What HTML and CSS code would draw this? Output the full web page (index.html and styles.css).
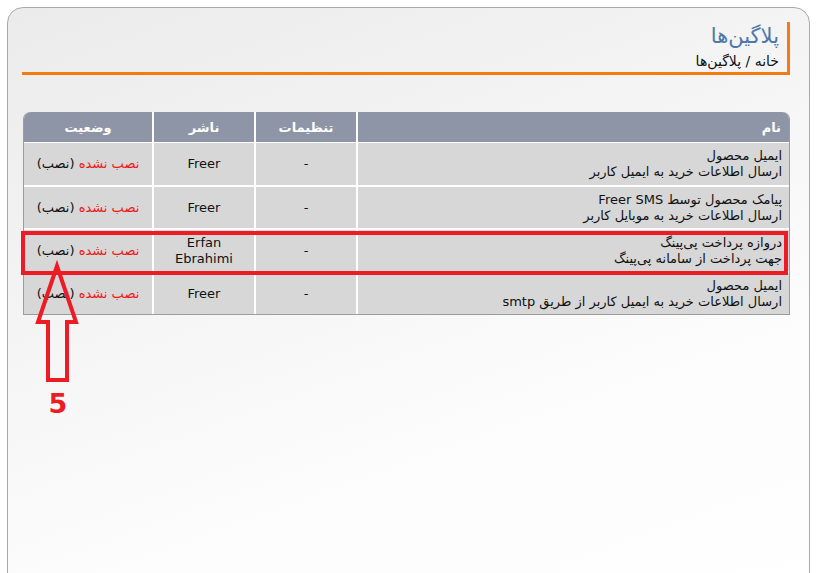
FILE: index.html
```html
<!DOCTYPE html>
<html lang="fa">
<head>
<meta charset="utf-8">
<title>پلاگین‌ها</title>
<link rel="stylesheet" href="styles.css">
</head>
<body>
<div class="panel" dir="rtl">
  <div class="page-head">
    <h1 class="title">پلاگین‌ها</h1>
    <div class="crumbs">خانه / پلاگین‌ها</div>
  </div>
  <table class="plugins">
    <thead>
      <tr>
        <th class="c-name">نام</th>
        <th class="c-set">تنظیمات</th>
        <th class="c-pub">ناشر</th>
        <th class="c-stat">وضعیت</th>
      </tr>
    </thead>
    <tbody>
      <tr>
        <td class="c-name">ایمیل محصول<br>ارسال اطلاعات خرید به ایمیل کاربر</td>
        <td class="c-set">-</td>
        <td class="c-pub">Freer</td>
        <td class="c-stat"><span class="red">نصب نشده</span> (نصب)</td>
      </tr>
      <tr>
        <td class="c-name">پیامک محصول توسط Freer SMS<br>ارسال اطلاعات خرید به موبایل کاربر</td>
        <td class="c-set">-</td>
        <td class="c-pub">Freer</td>
        <td class="c-stat"><span class="red">نصب نشده</span> (نصب)</td>
      </tr>
      <tr>
        <td class="c-name">دروازه پرداخت پی‌پینگ<br>جهت پرداخت از سامانه پی‌پینگ</td>
        <td class="c-set">-</td>
        <td class="c-pub">Erfan<br>Ebrahimi</td>
        <td class="c-stat"><span class="red">نصب نشده</span> (نصب)</td>
      </tr>
      <tr>
        <td class="c-name">ایمیل محصول<br>ارسال اطلاعات خرید به ایمیل کاربر از طریق smtp</td>
        <td class="c-set">-</td>
        <td class="c-pub">Freer</td>
        <td class="c-stat"><span class="red">نصب نشده</span> (نصب)</td>
      </tr>
    </tbody>
  </table>
</div>
<div class="highlight"></div>
<svg class="annot" width="817" height="573" viewBox="0 0 817 573">
  <polygon points="57,266 38,322 48,322 48,380 67,380 67,322 76,322" fill="none" stroke="#ed1c24" stroke-width="4" stroke-linejoin="miter"/>
  <text x="58" y="413" text-anchor="middle" class="five">5</text>
</svg>
</body>
</html>
```

FILE: styles.css
```css
html, body {
  margin: 0;
  padding: 0;
  background: #ffffff;
  overflow: hidden;
}
body {
  position: relative;
  width: 817px;
  height: 573px;
  font-family: "DejaVu Sans", "Liberation Sans", sans-serif;
  font-size: 13px;
  color: #111;
}
.panel {
  margin: 7px 0 0 7px;
  width: 803px;
  height: 620px;
  border: 1px solid #a9a9a9;
  border-radius: 16px 16px 0 0;
  background: linear-gradient(160deg, #ebebeb 0%, #f4f4f4 35%, #fcfcfc 65%, #ffffff 100%);
  padding: 14px 19px 0 14px;
  box-sizing: border-box;
}
.page-head {
  border-right: 3px solid #f47a12;
  border-bottom: 3px solid #f47a12;
  height: 53px;
  padding-right: 8px;
  box-sizing: border-box;
  display: flex;
  flex-direction: column;
}
.title {
  margin: 0;
  font-size: 21px;
  font-weight: normal;
  color: #4d76aa;
  line-height: 28px;
  height: 30px;
}
.crumbs {
  font-size: 14px;
  line-height: 18px;
  color: #111;
}
.plugins {
  margin-top: 37px;
  width: 765px;
  border-collapse: separate;
  border-spacing: 0;
  border: 1px solid #9c9c9c;
  border-top: none;
  border-radius: 7px 7px 0 0;
  table-layout: fixed;
}
.plugins th {
  background: #8e95a7;
  color: #ffffff;
  font-weight: bold;
  font-size: 13px;
  height: 30px;
  padding: 0 8px;
  border-left: 2px solid #ffffff;
  text-align: center;
  box-sizing: border-box;
}
.plugins th.c-name {
  text-align: right;
  border-radius: 0 7px 0 0;
}
.plugins th.c-stat {
  border-left: none;
  border-radius: 7px 0 0 0;
}
.plugins td {
  background: #d7d7d7;
  height: 43px;
  padding: 0 6px;
  border-top: 2px solid #ffffff;
  border-left: 2px solid #ffffff;
  text-align: center;
  line-height: 16px;
  box-sizing: border-box;
}
.plugins tbody tr:first-child td {
  border-top: 1px solid #ffffff;
}
.plugins td.c-stat {
  border-left: none;
}
.plugins td.c-name {
  text-align: right;
  padding-right: 7px;
}
.c-name { width: 433px; }
.c-set { width: 102px; }
.c-pub { width: 102px; }
.c-stat { width: 128px; }
.red { color: #f01818; }
.highlight {
  position: absolute;
  left: 21px;
  top: 231px;
  width: 767px;
  height: 44px;
  border: 4px solid #ed1c24;
  box-sizing: border-box;
  pointer-events: none;
}
.annot {
  position: absolute;
  left: 0;
  top: 0;
  pointer-events: none;
}
.five {
  font-family: "DejaVu Sans", sans-serif;
  font-weight: bold;
  font-size: 27px;
  fill: #ed1c24;
}
```
